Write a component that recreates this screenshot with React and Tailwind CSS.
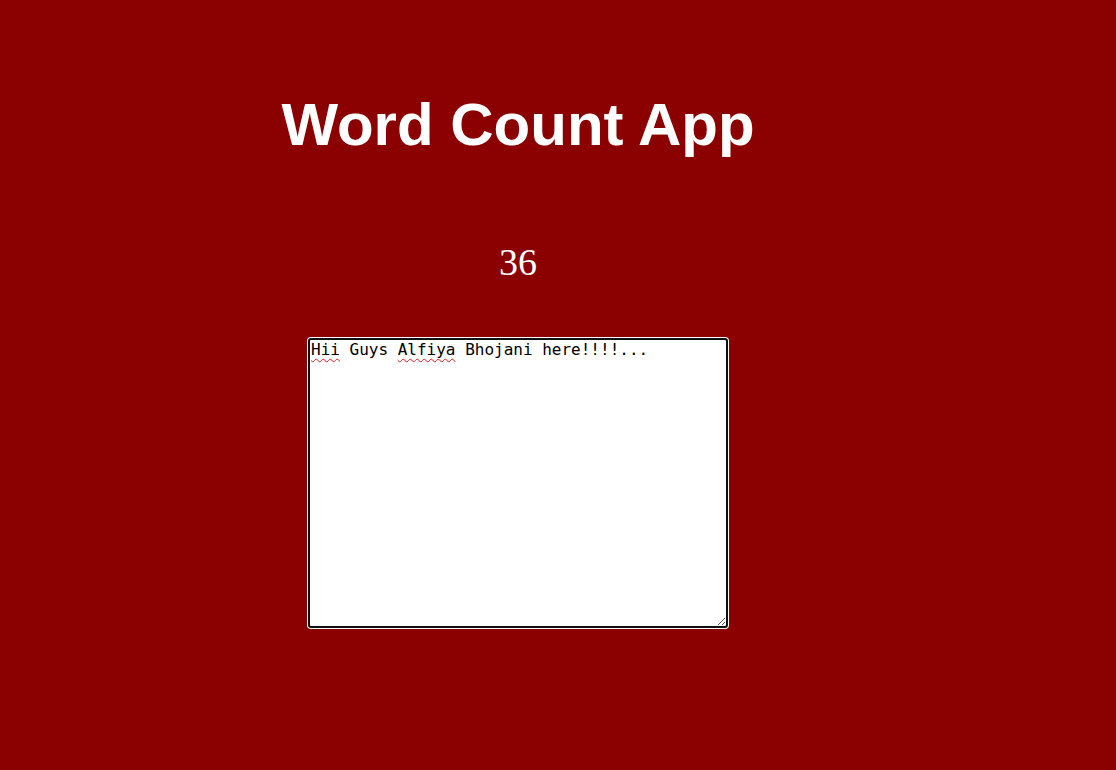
export default function App() {
  return (
    <div className="min-h-screen bg-[#8b0000]">
      <div className="w-[1036px] flex flex-col items-center">
        <h1
          className="pt-[90px] text-[60px] leading-[69px] font-bold text-white"
          style={{ fontFamily: '"Liberation Sans", Arial, sans-serif' }}
        >
          Word Count App
        </h1>
        <p
          className="mt-[81px] text-[38px] leading-[44px] text-white"
          style={{ fontFamily: '"Liberation Serif", "Times New Roman", serif' }}
        >
          36
        </p>
        <div className="relative mt-[54px] w-[420px] h-[290px] bg-white border-2 border-[#101010] rounded-[3px] shadow-[0_0_0_1px_#ffffff] p-[1px] text-left">
          <div
            className="text-[16px] leading-[18.6px] text-black whitespace-pre"
            style={{ fontFamily: '"DejaVu Sans Mono", monospace' }}
          >
            <span className="underline decoration-wavy decoration-[#e11d1d] decoration-1 underline-offset-[3px]">Hii</span>
            {" Guys "}
            <span className="underline decoration-wavy decoration-[#e11d1d] decoration-1 underline-offset-[3px]">Alfiya</span>
            {" Bhojani here!!!!..."}
          </div>
          <svg
            className="absolute right-0 bottom-0"
            width="10"
            height="10"
            viewBox="0 0 10 10"
          >
            <line x1="9" y1="2" x2="2" y2="9" stroke="#555" strokeWidth="1" />
            <line x1="9" y1="6" x2="6" y2="9" stroke="#555" strokeWidth="1" />
          </svg>
        </div>
      </div>
    </div>
  );
}
